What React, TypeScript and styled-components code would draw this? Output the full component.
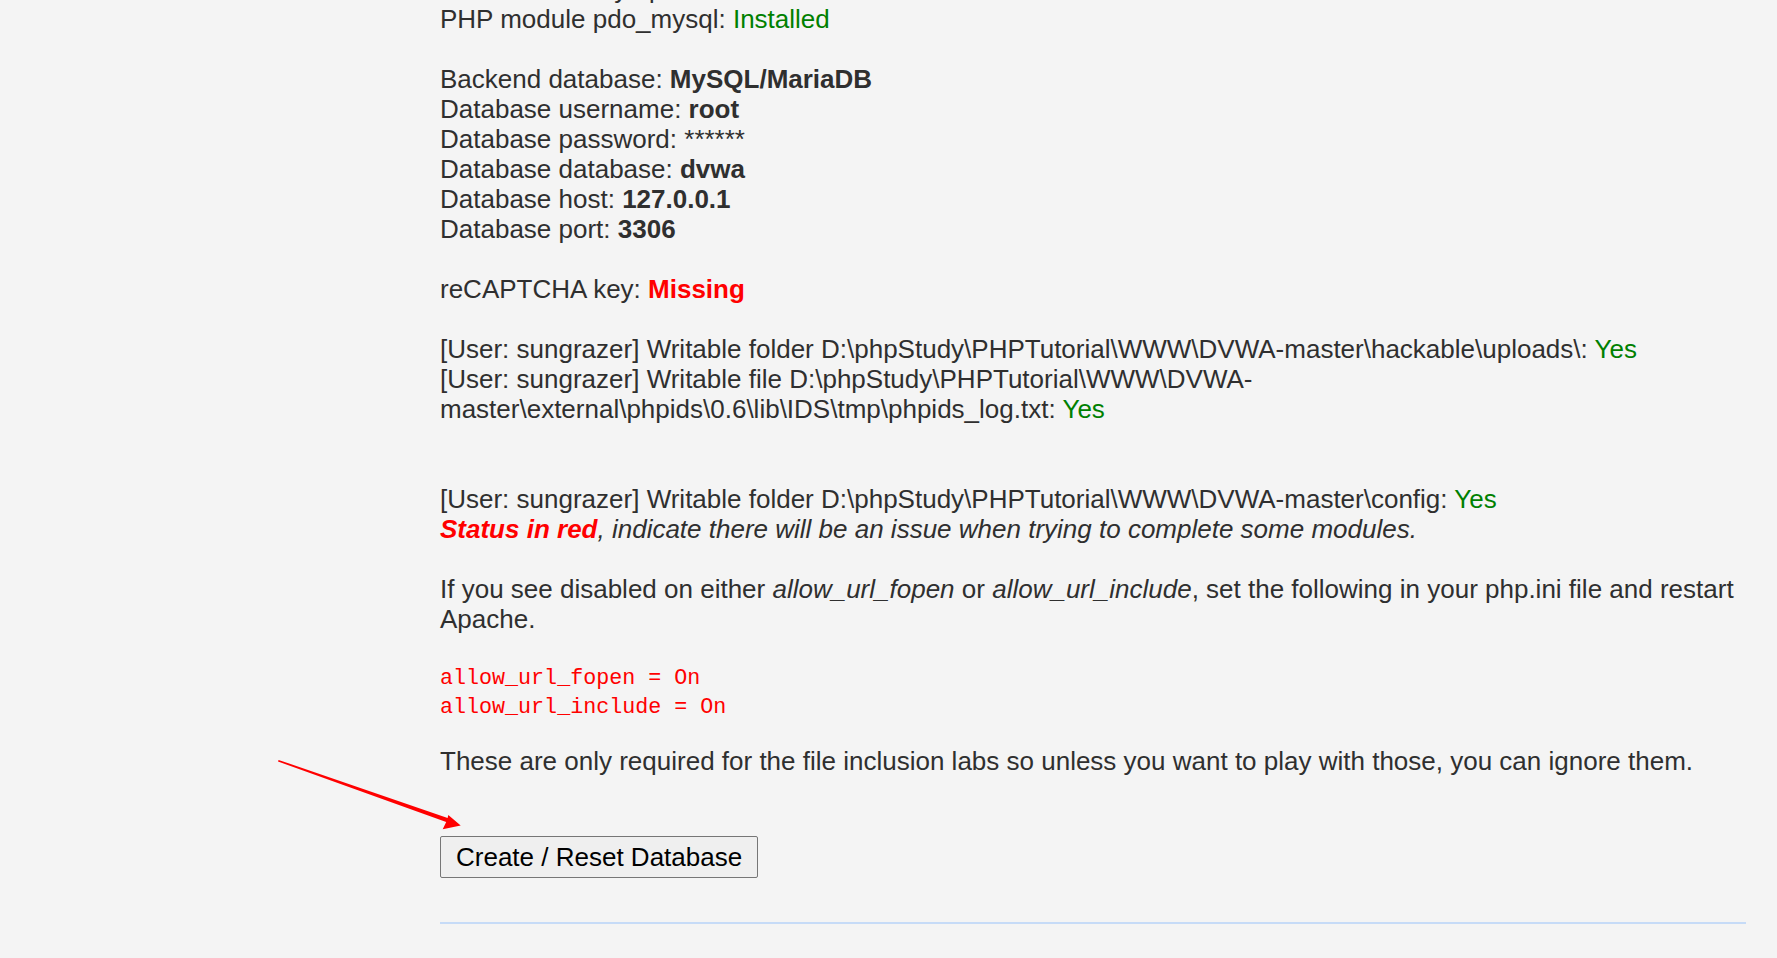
import React from "react";
import styled, { createGlobalStyle } from "styled-components";

const GlobalStyle = createGlobalStyle`
  html, body {
    margin: 0;
    padding: 0;
    background: #f4f4f4;
  }
`;

const Page = styled.div`
  position: relative;
  min-height: 958px;
  overflow: hidden;
  background: #f4f4f4;
  font-family: "Liberation Sans", Arial, sans-serif;
  font-size: 26px;
  line-height: 30px;
  color: #2f2f2f;
`;

// page is scrolled: the line above pdo_mysql is cut at the top edge
const Main = styled.main`
  display: flex;
  flex-direction: column;
  width: 1306px;
  margin: -26px 0 0 440px;
`;

const Body = styled.div``;

const Line = styled.div``;

const Spacer = styled.div<{ $rows?: number }>`
  height: ${({ $rows = 1 }) => $rows * 30}px;
`;

const Ok = styled.span`
  color: #008000;
`;

const Bad = styled.span`
  color: #ff0000;
  font-weight: bold;
`;

const Note = styled.i`
  font-style: italic;
`;

const Code = styled.pre`
  margin: 30px 0 24px;
  font-family: "Liberation Mono", "Courier New", monospace;
  font-size: 21.7px;
  line-height: 29px;
  color: #ff0000;
`;

const Para = styled.p`
  margin: 0;
`;

const Form = styled.form`
  margin: 60px 0 44px;
`;

const SubmitButton = styled.button`
  padding: 5px 15px;
  border: 1px solid #767676;
  border-radius: 2px;
  background: #efefef;
  color: #000;
  font-family: "Liberation Sans", Arial, sans-serif;
  font-size: 26px;
  line-height: 30px;
  cursor: pointer;
`;

const Rule = styled.hr`
  width: 100%;
  height: 2px;
  margin: 0;
  border: none;
  background: #c6dbf7;
`;

const Annotation = styled.svg`
  position: absolute;
  left: 270px;
  top: 750px;
  width: 200px;
  height: 90px;
`;

const dbRows: [string, string][] = [
  ["Backend database", "MySQL/MariaDB"],
  ["Database username", "root"],
  ["Database password", ""],
  ["Database database", "dvwa"],
  ["Database host", "127.0.0.1"],
  ["Database port", "3306"],
];

const App: React.FC = () => {
  return (
    <>
      <GlobalStyle />
      <Page>
        <Main>
          <Body>
            <Line>
              PHP module mysql: <Ok>Installed</Ok>
            </Line>
            <Line>
              PHP module pdo_mysql: <Ok>Installed</Ok>
            </Line>
            <Spacer />
            {dbRows.map(([label, value]) => (
              <Line key={label}>
                {label}: {value ? <b>{value}</b> : "******"}
              </Line>
            ))}
            <Spacer />
            <Line>
              reCAPTCHA key: <Bad>Missing</Bad>
            </Line>
            <Spacer />
            <Line>
              [User: sungrazer] Writable folder
              D:\phpStudy\PHPTutorial\WWW\DVWA-master\hackable\uploads\:{" "}
              <Ok>Yes</Ok>
            </Line>
            <Line>
              [User: sungrazer] Writable file
              D:\phpStudy\PHPTutorial\WWW\DVWA-master\external\phpids\0.6\lib\IDS\tmp\phpids_log.txt:{" "}
              <Ok>Yes</Ok>
            </Line>
            <Spacer $rows={2} />
            <Line>
              [User: sungrazer] Writable folder
              D:\phpStudy\PHPTutorial\WWW\DVWA-master\config: <Ok>Yes</Ok>
            </Line>
            <Line>
              <Note>
                <Bad>Status in red</Bad>, indicate there will be an issue when
                trying to complete some modules.
              </Note>
            </Line>
            <Spacer />
            <Line>
              If you see disabled on either <i>allow_url_fopen</i> or{" "}
              <i>allow_url_include</i>, set the following in your php.ini file
              and restart Apache.
            </Line>
            <Code>
              {"allow_url_fopen = On\nallow_url_include = On"}
            </Code>
            <Para>
              These are only required for the file inclusion labs so unless you
              want to play with those, you can ignore them.
            </Para>
          </Body>
          <Form onSubmit={(e) => e.preventDefault()}>
            <SubmitButton type="submit">Create / Reset Database</SubmitButton>
          </Form>
          <Rule />
        </Main>
        <Annotation viewBox="0 0 200 90">
          <polygon
            fill="#ff0000"
            points="8.6,9.9 177.6,68 178.3,65 190.7,75.5 172.7,79.3 176.2,72 8,11.5"
          />
        </Annotation>
      </Page>
    </>
  );
};

export default App;
